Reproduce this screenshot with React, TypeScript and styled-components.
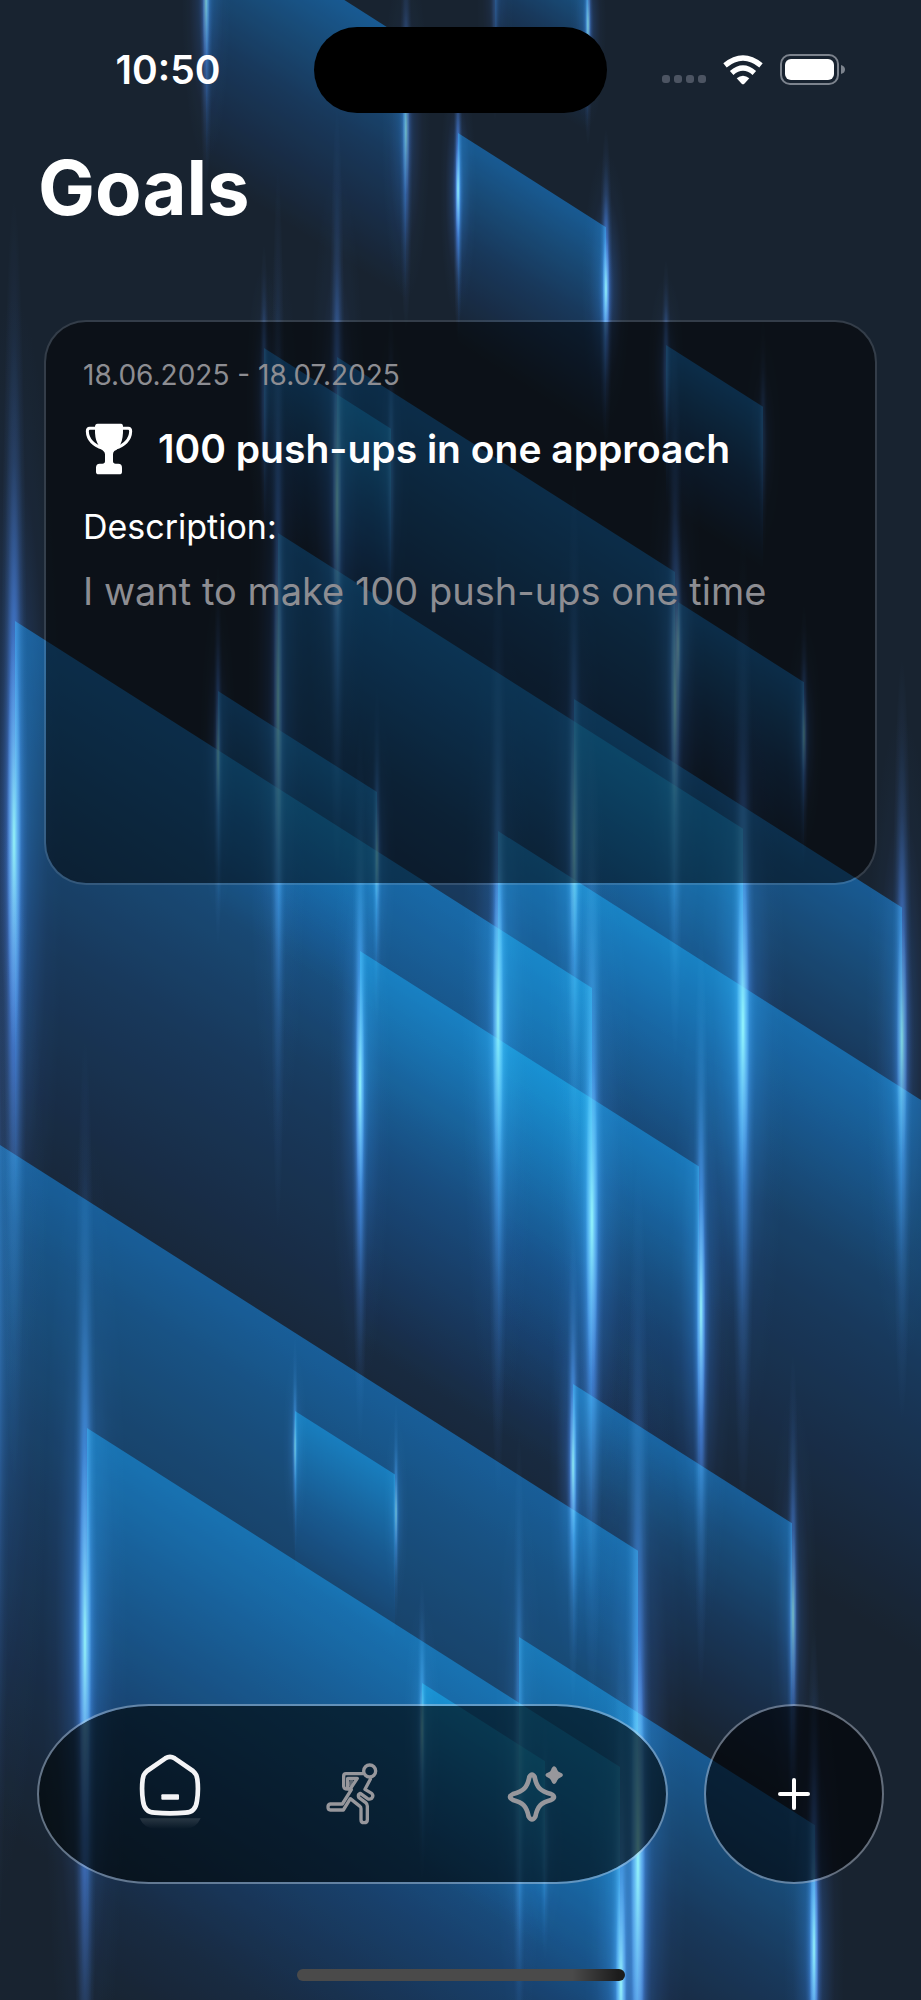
import React from "react";
import styled, { createGlobalStyle } from "styled-components";

const GlobalStyle = createGlobalStyle`
  * { box-sizing: border-box; }
  body {
    margin: 0;
    background: #182330;
    color: #fff;
    font-family: Inter, "Liberation Sans", sans-serif;
  }
`;

/* ---------- Backdrop: slanted light panels and vertical glow lines ---------- */

const SLOPE = 0.636;

type Panel = { x1: number; x2: number; y: number };
type Glow = { x: number; y: number; half: number; w: number; power: number };

const panels: Panel[] = [
  { x1: 206, x2: 406, y: -88 },
  { x1: 495, x2: 588, y: -85 },
  { x1: 458, x2: 606, y: 133 },
  { x1: 264, x2: 391, y: 348 },
  { x1: 337, x2: 675, y: 357 },
  { x1: 666, x2: 763, y: 345 },
  { x1: 678, x2: 804, y: 602 },
  { x1: 278, x2: 743, y: 533 },
  { x1: 574, x2: 902, y: 699 },
  { x1: 498, x2: 1010, y: 831 },
  { x1: 15, x2: 592, y: 621 },
  { x1: 218, x2: 377, y: 691 },
  { x1: 360, x2: 699, y: 951 },
  { x1: -8, x2: 638, y: 1140 },
  { x1: 87, x2: 620, y: 1428 },
  { x1: 295, x2: 395, y: 1411 },
  { x1: 422, x2: 545, y: 1683 },
  { x1: 573, x2: 792, y: 1384 },
  { x1: 519, x2: 815, y: 1637 },
];

const glows: Glow[] = [
  { x: 206, y: 0, half: 190, w: 4, power: 0.75 },
  { x: 406, y: 130, half: 200, w: 4, power: 0.7 },
  { x: 495, y: 0, half: 120, w: 3, power: 0.35 },
  { x: 588, y: 25, half: 120, w: 3, power: 0.8 },
  { x: 458, y: 190, half: 150, w: 3, power: 1 },
  { x: 606, y: 289, half: 160, w: 4, power: 1 },
  { x: 264, y: 395, half: 150, w: 3, power: 0.6 },
  { x: 337, y: 500, half: 390, w: 5, power: 0.85 },
  { x: 391, y: 475, half: 170, w: 3, power: 0.5 },
  { x: 278, y: 700, half: 530, w: 5, power: 0.85 },
  { x: 666, y: 370, half: 110, w: 3, power: 0.6 },
  { x: 763, y: 440, half: 120, w: 3, power: 0.4 },
  { x: 678, y: 645, half: 130, w: 3, power: 0.8 },
  { x: 675, y: 700, half: 360, w: 5, power: 0.9 },
  { x: 804, y: 735, half: 130, w: 3, power: 0.7 },
  { x: 574, y: 840, half: 360, w: 5, power: 0.8 },
  { x: 902, y: 1040, half: 380, w: 6, power: 0.85 },
  { x: 498, y: 1020, half: 480, w: 6, power: 0.95 },
  { x: 743, y: 1025, half: 490, w: 7, power: 1 },
  { x: 14, y: 840, half: 640, w: 8, power: 1 },
  { x: 592, y: 1220, half: 500, w: 7, power: 1 },
  { x: 218, y: 755, half: 190, w: 3, power: 0.75 },
  { x: 377, y: 855, half: 170, w: 3, power: 0.7 },
  { x: 360, y: 1085, half: 360, w: 5, power: 1 },
  { x: 701, y: 1310, half: 380, w: 5, power: 1 },
  { x: -6, y: 1350, half: 640, w: 9, power: 0.55 },
  { x: 85, y: 1640, half: 600, w: 7, power: 1 },
  { x: 295, y: 1447, half: 110, w: 2, power: 0.7 },
  { x: 396, y: 1512, half: 110, w: 2, power: 0.7 },
  { x: 422, y: 1730, half: 150, w: 3, power: 0.75 },
  { x: 545, y: 1840, half: 120, w: 3, power: 0.5 },
  { x: 573, y: 1465, half: 240, w: 4, power: 0.95 },
  { x: 793, y: 1615, half: 260, w: 4, power: 0.75 },
  { x: 519, y: 1765, half: 330, w: 4, power: 0.6 },
  { x: 638, y: 1860, half: 700, w: 8, power: 1 },
  { x: 621, y: 1985, half: 350, w: 6, power: 1 },
  { x: 814, y: 1948, half: 320, w: 5, power: 1 },
];

const Backdrop = styled.svg`
  position: absolute;
  inset: 0;
  width: 100%;
  height: 100%;
  z-index: -1;
  .lit { mix-blend-mode: screen; }
`;

function LightField() {
  return (
    <Backdrop viewBox="0 0 921 2000" preserveAspectRatio="xMidYMin slice" aria-hidden="true">
      <defs>
        {panels.map((p, i) => {
          const fade = (p.x2 - p.x1) * 0.95 + 70;
          const k = fade / (1 + SLOPE * SLOPE);
          return (
            <linearGradient
              key={i}
              id={`panel${i}`}
              gradientUnits="userSpaceOnUse"
              x1={p.x1}
              y1={p.y}
              x2={p.x1 - SLOPE * k}
              y2={p.y + k}
            >
              <stop offset="0" stopColor="#004079" />
              <stop offset="0.25" stopColor="#002c54" />
              <stop offset="0.5" stopColor="#001834" />
              <stop offset="0.75" stopColor="#000b1b" />
              <stop offset="1" stopColor="#000000" />
            </linearGradient>
          );
        })}
        <radialGradient id="halo">
          <stop offset="0" stopColor="#1c50b0" stopOpacity="0.75" />
          <stop offset="0.35" stopColor="#1c4aa0" stopOpacity="0.3" />
          <stop offset="0.7" stopColor="#1c3c80" stopOpacity="0.07" />
          <stop offset="1" stopColor="#1c3c80" stopOpacity="0" />
        </radialGradient>
        <radialGradient id="beam">
          <stop offset="0" stopColor="#3a84f5" />
          <stop offset="0.35" stopColor="#3672e0" stopOpacity="0.7" />
          <stop offset="0.6" stopColor="#3060bc" stopOpacity="0.3" />
          <stop offset="0.8" stopColor="#2c58aa" stopOpacity="0.1" />
          <stop offset="1" stopColor="#2c58aa" stopOpacity="0" />
        </radialGradient>
        <radialGradient id="core">
          <stop offset="0" stopColor="#8af2f4" />
          <stop offset="0.5" stopColor="#6cbcf0" stopOpacity="0.55" />
          <stop offset="1" stopColor="#5fa0f0" stopOpacity="0" />
        </radialGradient>
      </defs>
      <rect width="921" height="2000" fill="#182330" />
      {panels.map((p, i) => {
        const right = p.y + (p.x2 - p.x1) * SLOPE;
        const drop = (p.x2 - p.x1) * 0.95 + 70;
        return (
          <polygon
            key={i}
            className="lit"
            fill={`url(#panel${i})`}
            points={`${p.x1},${p.y} ${p.x2},${right} ${p.x2},${right + drop} ${p.x1},${p.y + drop}`}
          />
        );
      })}
      {glows.map((g, i) => (
        <g key={i} className="lit" opacity={g.power}>
          <ellipse cx={g.x} cy={g.y} rx={g.w * 6} ry={g.half * 0.85} fill="url(#halo)" />
          <ellipse cx={g.x} cy={g.y} rx={g.w * 1.7} ry={g.half} fill="url(#beam)" />
          {g.power > 0.6 && (
            <ellipse cx={g.x} cy={g.y} rx={g.w * 0.9} ry={g.half * 0.33} fill="url(#core)" />
          )}
        </g>
      ))}
    </Backdrop>
  );
}

/* ---------- Layout ---------- */

const Screen = styled.div`
  position: relative;
  isolation: isolate;
  overflow: hidden;
  min-height: 100vh;
  display: flex;
  flex-direction: column;
`;

const StatusBar = styled.header`
  display: grid;
  grid-template-columns: 1fr 293px 1fr;
  align-items: center;
  padding-top: 27px;
`;

const Clock = styled.time`
  justify-self: center;
  padding-left: 22px;
  font-size: 39px;
  line-height: 48px;
  font-weight: 600;
`;

const Island = styled.div`
  height: 86px;
  border-radius: 43px;
  background: #000;
`;

const StatusIcons = styled.div`
  justify-self: center;
  display: flex;
  align-items: center;
  gap: 17px;
  padding-right: 20px;
`;

const SignalDots = styled.div`
  display: flex;
  gap: 4px;
  padding-top: 18px;
`;

const Dot = styled.span`
  width: 8px;
  height: 8px;
  border-radius: 3px;
  background: #4c5462;
`;

const Title = styled.h1`
  margin: 26px 0 0;
  padding: 0 38px;
  font-size: 76px;
  line-height: 96px;
  font-weight: 700;
`;

const GoalCard = styled.article`
  margin: 85px 44px 0;
  min-height: 565px;
  padding: 34px 37px;
  border: 2px solid rgba(255, 255, 255, 0.12);
  border-radius: 42px;
  background: rgba(0, 0, 0, 0.5);
  background-clip: padding-box;
`;

const Period = styled.p`
  margin: 0;
  font-size: 28px;
  line-height: 38px;
  color: #8d8d92;
`;

const GoalHeading = styled.div`
  display: flex;
  align-items: center;
  gap: 23px;
  margin-top: 27px;
`;

const GoalName = styled.h2`
  margin: 0;
  font-size: 39px;
  line-height: 56px;
  font-weight: 600;
`;

const Label = styled.h3`
  margin: 28px 0 0;
  font-size: 34px;
  line-height: 44px;
  font-weight: 400;
`;

const Description = styled.p`
  margin: 16px 0 0;
  font-size: 38px;
  line-height: 52px;
  color: #8d8d92;
`;

const Dock = styled.footer`
  display: flex;
  gap: 36px;
  margin: auto 37px 0;
`;

const Tabs = styled.nav`
  flex: 1;
  display: flex;
  height: 180px;
  padding: 0 40px;
  border: 2px solid rgba(190, 210, 230, 0.45);
  border-radius: 112px / 90px;
  background: rgba(0, 6, 8, 0.64);
  background-clip: padding-box;
`;

const Tab = styled.button<{ $active?: boolean }>`
  flex: 1;
  display: flex;
  align-items: center;
  justify-content: center;
  padding: 0;
  border: 0;
  background: none;
  color: ${(p) => (p.$active ? "#f4f4f6" : "#97979c")};
`;

const AddButton = styled.button`
  display: flex;
  align-items: center;
  justify-content: center;
  width: 180px;
  height: 180px;
  padding: 0;
  border: 2px solid rgba(190, 200, 215, 0.45);
  border-radius: 50%;
  background: rgba(0, 2, 5, 0.64);
  background-clip: padding-box;
  color: #fff;
`;

const HomeIndicator = styled.div`
  align-self: center;
  width: 328px;
  height: 12px;
  margin: 85px 0 19px;
  border-radius: 6px;
  background: linear-gradient(90deg, #4a4a4a 84%, #1c1c1c 98%);
`;

/* ---------- Icons ---------- */

const WifiIcon = () => (
  <svg width="40" height="30" viewBox="0 0 120 90" aria-label="Wi-Fi" role="img">
    <g fill="none" stroke="#fff" strokeWidth="16">
      <path d="M6 31Q60 -13 114 31" />
      <path d="M26 54Q60 24 94 54" />
    </g>
    <path d="M41 70Q60 54 79 70L64 86Q60 90 56 86Z" fill="#fff" />
  </svg>
);

const BatteryIcon = () => (
  <svg width="66" height="32" viewBox="0 0 66 32" aria-label="Battery full" role="img">
    <rect x="1" y="1" width="57" height="29" rx="9" fill="none" stroke="#7c838d" strokeWidth="2" />
    <rect x="5" y="5" width="49" height="21" rx="6" fill="#fff" />
    <path d="M61 11Q65 12 65 15.500T61 20Z" fill="#7c838d" />
  </svg>
);

const TrophyIcon = () => (
  <svg width="52" height="56" viewBox="162 334 156 168" aria-hidden="true">
    <path
      fill="#fff"
      d="M206 342H276Q283 342 282 354Q283 385 275 402Q268 418 256 424Q252 428 252 434V455Q252 462 260 462H268Q279 462 279 474V486Q279 494 271 494H209Q201 494 201 486V474Q201 462 212 462H220Q228 462 228 455V434Q228 428 223 424Q211 416 205 400Q197 385 198 354Q197 342 206 342Z"
    />
    <path
      fill="none"
      stroke="#fff"
      strokeWidth="9"
      strokeLinejoin="round"
      d="M200 356H182Q175 356 175 365C176 390 192 406 222 416M280 356H298Q305 356 305 365C304 390 288 406 258 416"
    />
  </svg>
);

const HomeIcon = () => (
  <svg width="68" height="84" viewBox="347 212 204 252" aria-hidden="true">
    <defs>
      <linearGradient id="homeShade" x1="0" y1="0" x2="0" y2="1">
        <stop offset="0" stopColor="#fff" stopOpacity="0.13" />
        <stop offset="1" stopColor="#fff" stopOpacity="0" />
      </linearGradient>
    </defs>
    <path d="M358 411H541Q528 441 495 443H404Q371 441 358 411Z" fill="url(#homeShade)" />
    <path
      fill="none"
      stroke="currentColor"
      strokeWidth="14"
      strokeLinejoin="round"
      d="M435 231Q449 222 463 231L518 269Q529 278 531 294Q535 325 530 358Q526 393 495 394Q449 398 403 394Q372 393 368 358Q363 325 367 294Q369 278 380 269Z"
    />
    <rect x="423" y="339" width="53" height="16" rx="3" fill="currentColor" />
  </svg>
);

const RunnerIcon = () => (
  <svg width="54" height="64" viewBox="75 244 162 192" aria-hidden="true">
    <g fill="none" stroke="currentColor" strokeWidth="10" strokeLinejoin="round" strokeLinecap="round">
      <circle cx="209" cy="271" r="18" />
      <path d="M188 279H138Q131 279 131 286V317Q132 326 145 325L154 327L127 370H91Q84 371 84 379Q84 388 91 388H130L151 354L180 377Q183 379 183 384V417Q183 426 192 426Q202 426 202 417V376Q202 370 197 366L176 350Q173 341 181 338L203 354Q209 357 215 353Q222 345 215 338L195 326L211 296" />
      <path d="M143 322V293H172L150 326" />
      <path d="M155 300L150 312" strokeOpacity="0.6" />
    </g>
  </svg>
);

const SparkleIcon = () => (
  <svg width="58" height="58" viewBox="621 252 174 174" aria-hidden="true">
    <path
      fill="none"
      stroke="currentColor"
      strokeWidth="14"
      strokeLinejoin="round"
      d="M691 288Q699 274 707 288C713 320 724 330 756 339Q774 348 756 357C727 365 716 374 709 407Q699 424 689 407C682 374 671 365 642 357Q624 348 642 339C674 330 685 320 691 288Z"
    />
    <path
      fill="currentColor"
      d="M765 256Q771 256 775 267Q777 272 782 274Q792 278 792 282Q792 287 782 291Q777 293 775 298Q771 309 765 309Q760 309 756 298Q754 293 749 291Q739 287 739 282Q739 278 749 274Q754 272 756 267Q760 256 765 256Z"
    />
  </svg>
);

const PlusIcon = () => (
  <svg width="34" height="34" viewBox="0 0 34 34" aria-hidden="true">
    <path d="M17 3V31M3 17H31" stroke="currentColor" strokeWidth="4" strokeLinecap="round" />
  </svg>
);

export default function App() {
  return (
    <>
      <GlobalStyle />
      <Screen>
        <LightField />
        <StatusBar>
          <Clock>10:50</Clock>
          <Island />
          <StatusIcons>
            <SignalDots>
              <Dot />
              <Dot />
              <Dot />
              <Dot />
            </SignalDots>
            <WifiIcon />
            <BatteryIcon />
          </StatusIcons>
        </StatusBar>
        <main>
          <Title>Goals</Title>
          <GoalCard>
            <Period>18.06.2025 - 18.07.2025</Period>
            <GoalHeading>
              <TrophyIcon />
              <GoalName>100 push-ups in one approach</GoalName>
            </GoalHeading>
            <Label>Description:</Label>
            <Description>I want to make 100 push-ups one time</Description>
          </GoalCard>
        </main>
        <Dock>
          <Tabs aria-label="Sections">
            <Tab $active aria-label="Home" aria-current="page">
              <HomeIcon />
            </Tab>
            <Tab aria-label="Workouts">
              <RunnerIcon />
            </Tab>
            <Tab aria-label="Inspiration">
              <SparkleIcon />
            </Tab>
          </Tabs>
          <AddButton aria-label="Add goal">
            <PlusIcon />
          </AddButton>
        </Dock>
        <HomeIndicator />
      </Screen>
    </>
  );
}
